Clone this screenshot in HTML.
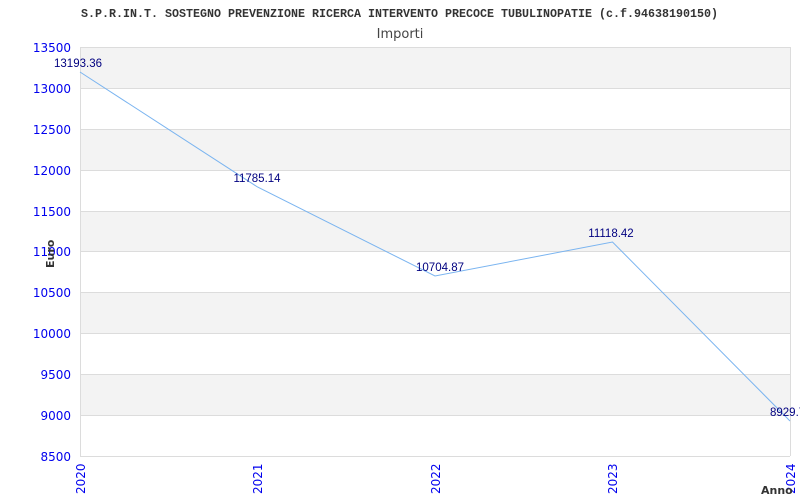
<!DOCTYPE html>
<html><head><style>body{margin:0;background:#fff}svg{display:block}</style></head><body>
<svg width="800" height="500" xmlns="http://www.w3.org/2000/svg">
<rect width="800" height="500" fill="#fff"/>
<g fill="#f3f3f3">
<rect x="80" y="47" width="710" height="41"/>
<rect x="80" y="129" width="710" height="41"/>
<rect x="80" y="211" width="710" height="41"/>
<rect x="80" y="292" width="710" height="41"/>
<rect x="80" y="374" width="710" height="41"/>
</g>
<g stroke="#dcdcdc" stroke-width="1">
<line x1="80" y1="47.5" x2="790" y2="47.5"/>
<line x1="80" y1="88.5" x2="790" y2="88.5"/>
<line x1="80" y1="129.5" x2="790" y2="129.5"/>
<line x1="80" y1="170.5" x2="790" y2="170.5"/>
<line x1="80" y1="211.5" x2="790" y2="211.5"/>
<line x1="80" y1="251.5" x2="790" y2="251.5"/>
<line x1="80" y1="292.5" x2="790" y2="292.5"/>
<line x1="80" y1="333.5" x2="790" y2="333.5"/>
<line x1="80" y1="374.5" x2="790" y2="374.5"/>
<line x1="80" y1="415.5" x2="790" y2="415.5"/>
<line x1="80" y1="456.5" x2="790" y2="456.5"/>
<line x1="80.5" y1="47" x2="80.5" y2="456"/>
<line x1="790.5" y1="47" x2="790.5" y2="456"/>
</g>
<text x="81" y="17" textLength="637" lengthAdjust="spacingAndGlyphs" font-family="Liberation Mono, monospace" font-size="11.5" font-weight="bold" fill="#333">S.P.R.IN.T. SOSTEGNO PREVENZIONE RICERCA INTERVENTO PRECOCE TUBULINOPATIE (c.f.94638190150)</text>
<text x="400" y="38" text-anchor="middle" font-family="DejaVu Sans, sans-serif" font-size="13" fill="#444">Importi</text>
<g font-family="DejaVu Sans, sans-serif" font-size="12" fill="#0000ee" text-anchor="end">
<text x="71" y="52">13500</text><text x="71" y="93">13000</text><text x="71" y="134">12500</text>
<text x="71" y="175">12000</text><text x="71" y="216">11500</text><text x="71" y="256">11000</text>
<text x="71" y="297">10500</text><text x="71" y="338">10000</text><text x="71" y="379">9500</text>
<text x="71" y="420">9000</text><text x="71" y="461">8500</text>
</g>
<g font-family="DejaVu Sans, sans-serif" font-size="12" fill="#0000ee">
<text transform="translate(85,494) rotate(-90)">2020</text>
<text transform="translate(262,494) rotate(-90)">2021</text>
<text transform="translate(440,494) rotate(-90)">2022</text>
<text transform="translate(617,494) rotate(-90)">2023</text>
<text transform="translate(795,494) rotate(-90)">2024</text>
</g>
<text transform="translate(54,268) rotate(-90)" font-family="DejaVu Sans, sans-serif" font-size="11" font-weight="bold" fill="#333">Euro</text>
<text x="761" y="494" font-family="DejaVu Sans, sans-serif" font-size="11" font-weight="bold" fill="#333">Anno</text>
<polyline fill="none" stroke="#7ab4f0" stroke-width="1" points="80,72 257.5,187 435,276 612.5,242 790,421"/>
<g font-family="Liberation Sans, sans-serif" font-size="11.5" fill="#000080" text-anchor="middle">
<text x="78" y="67">13193.36</text>
<text x="257" y="182">11785.14</text>
<text x="440" y="271">10704.87</text>
<text x="611" y="237">11118.42</text>
<text x="770" y="416" text-anchor="start">8929.7</text>
</g>
</svg>
</body></html>
